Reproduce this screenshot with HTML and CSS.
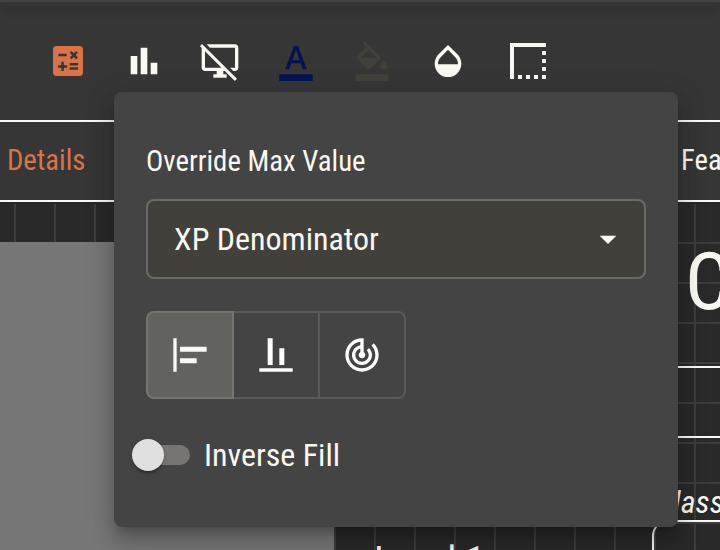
FILE: index.html
```
<!DOCTYPE html>
<html lang="en">
<head>
<meta charset="utf-8">
<title>Character Sheet</title>
<link rel="stylesheet" href="styles.css">
</head>
<body>
<div class="app">
  <div class="topbar"></div>
  <div class="toolbar">
    <svg class="icon accent" viewBox="0 0 24 24"><path d="M19 3H5c-1.1 0-2 .9-2 2v14c0 1.1.9 2 2 2h14c1.1 0 2-.9 2-2V5c0-1.1-.9-2-2-2m-5.97 4.06L14.09 6l1.41 1.41L16.91 6l1.06 1.06-1.41 1.41 1.41 1.41-1.06 1.06-1.41-1.4-1.41 1.41-1.06-1.06 1.41-1.41zm-6.78.66h5v1.5h-5zM11.5 16h-2v2H8v-2H6v-1.5h2v-2h1.5v2h2zm6.5 1.25h-5v-1.5h5zm0-2.5h-5v-1.5h5z"/></svg>
    <svg class="icon" viewBox="0 0 24 24"><path d="M4 9h4v11H4zm12 4h4v7h-4zm-6-9h4v16h-4z"/></svg>
    <svg class="icon" viewBox="0 0 24 24"><path d="M23 16c0 1.1-.9 2-2 2h-1l-2-2h3V4H6L4 2h17c1.1 0 2 .9 2 2zm-8.1 2 6 6 1.3-1.3-4.7-4.7-2-2L1.2 1.8 0 3.1l1 1V16c0 1.1.9 2 2 2h7v2H8v2h8v-2h-2v-2zM3 16V6.1l9.9 9.9z"/></svg>
    <svg class="icon navy" viewBox="0 0 24 24"><path d="M2 20h20v4H2zm3.49-3h2.42l1.27-3.58h5.65L16.09 17h2.42L13.25 3h-2.5zm4.42-5.61 2.03-5.79h.12l2.03 5.79z"/></svg>
    <svg class="icon muted" viewBox="0 0 24 24"><path d="M16.56 8.94 7.62 0 6.21 1.41l2.38 2.38-5.15 5.15c-.59.59-.59 1.54 0 2.12l5.5 5.5c.29.29.68.44 1.06.44s.77-.15 1.06-.44l5.5-5.5c.59-.58.59-1.53 0-2.12M5.21 10 10 5.21 14.79 10zM19 11.5s-2 2.17-2 3.5c0 1.1.9 2 2 2s2-.9 2-2c0-1.33-2-3.5-2-3.5M2 20h20v4H2z"/></svg>
    <svg class="icon" viewBox="0 0 24 24"><path d="M17.66 8 12 2.35 6.34 8C4.78 9.56 4 11.64 4 13.64s.78 4.11 2.34 5.67 3.61 2.35 5.66 2.35 4.1-.79 5.66-2.35S20 15.64 20 13.64 19.22 9.56 17.66 8M6 14c.01-2 .62-3.27 1.76-4.4L12 5.27l4.24 4.38C17.38 10.77 17.99 12 18 14z"/></svg>
    <svg class="icon large" viewBox="0 0 24 24"><path d="M15 21h2v-2h-2zm4 0h2v-2h-2zM7 21h2v-2H7zm4 0h2v-2h-2zm8-4h2v-2h-2zm0-4h2v-2h-2zM3 3v18h2V5h16V3zm16 6h2V7h-2z"/></svg>
  </div>
  <div class="tabs">
    <span class="tab accent-text">Details</span>
    <span class="tab">Features</span>
  </div>
  <div class="sheet">
    <div class="left">
      <div class="portrait"></div>
      <div class="level">Level 1</div>
    </div>
    <div class="right">
      <div class="name">C</div>
      <div class="rule"></div>
      <div class="klass">Class</div>
      <div class="box"></div>
    </div>
  </div>
</div>
<div class="panel">
  <div class="label">Override Max Value</div>
  <div class="select">
    <span class="text32">XP Denominator</span>
    <svg class="icon" viewBox="0 0 24 24"><path d="m7 10 5 5 5-5z"/></svg>
  </div>
  <div class="toggles">
    <div class="toggle selected"><svg class="icon" viewBox="0 0 24 24"><path d="M4 22H2V2h2zM22 7H6v3h16zm-6 7H6v3h10z"/></svg></div>
    <div class="toggle"><svg class="icon white" viewBox="0 0 24 24"><path d="M22 22H2v-2h20zM10 2H7v16h3zm7 6h-3v10h3z"/></svg></div>
    <div class="toggle"><svg class="icon white" viewBox="0 0 24 24"><path d="m19.07 4.93-1.41 1.41C19.1 7.79 20 9.79 20 12c0 4.42-3.58 8-8 8s-8-3.58-8-8c0-4.08 3.05-7.44 7-7.93v2.02C8.16 6.57 6 9.03 6 12c0 3.31 2.69 6 6 6s6-2.69 6-6c0-1.66-.67-3.16-1.76-4.24l-1.41 1.41C15.55 9.9 16 10.9 16 12c0 2.21-1.79 4-4 4s-4-1.79-4-4c0-1.86 1.28-3.41 3-3.86v2.14c-.6.35-1 .98-1 1.72 0 1.1.9 2 2 2s2-.9 2-2c0-.74-.4-1.38-1-1.72V2h-1C6.48 2 2 6.48 2 12s4.48 10 10 10 10-4.48 10-10c0-2.76-1.12-5.26-2.93-7.07"/></svg></div>
  </div>
  <div class="switch-row">
    <div class="track"><div class="thumb"></div></div>
    <span class="text32">Inverse Fill</span>
  </div>
</div>
</body>
</html>
```
FILE: styles.css
```
* { box-sizing: border-box; }
body {
  margin: 0;
  width: 720px;
  height: 550px;
  overflow: hidden;
  background: #292929;
  color: #f9f8f2;
  font-family: "Roboto Condensed", Roboto, sans-serif;
  font-stretch: 75%;
  white-space: nowrap;
}
.app { height: 550px; display: flex; flex-direction: column; overflow: hidden; }
.topbar {
  height: 2px;
  flex: none;
  background: #424242;
  position: relative;
  box-shadow: 0 4px 8px -2px rgba(0,0,0,.2), 0 8px 10px rgba(0,0,0,.14), 0 2px 20px rgba(0,0,0,.12);
}
.toolbar {
  height: 118px;
  flex: none;
  display: flex;
  align-items: center;
  gap: 36px;
  padding-left: 48px;
  background: #363636;
}
.icon { width: 40px; height: 40px; flex: none; fill: #f9f8f2; display: block; }
.accent { fill: #d9734a; }
.navy { fill: #051350; }
.muted { fill: #41403b; }
.white { fill: #fff; }
.large { width: 48px; height: 48px; }
.tabs {
  height: 82px;
  flex: none;
  display: flex;
  align-items: center;
  justify-content: space-between;
  padding-left: 7px;
  padding-bottom: 2px;
  border-top: 2px solid #f9f8f2;
  border-bottom: 2px solid #f9f8f2;
  background: #363636;
  font-size: 28.7px;
  position: relative;
  box-shadow: 0 2px 0 #272727;
}
.tab:last-child { width: 39px; }
.accent-text { color: #d9734a; }
.sheet {
  flex: 1;
  min-height: 0;
  display: flex;
  background-color: #292929;
  background-image:
    linear-gradient(90deg, #3d3d3d 2px, transparent 2px),
    linear-gradient(#3d3d3d 2px, transparent 2px);
  background-size: 40px 40px;
  background-position: 14px 0;
}
.left { width: 652px; flex: none; display: flex; padding-top: 40px; }
.portrait { width: 334px; height: 400px; background: #777; }
.level { padding: 296px 0 0 40px; font-size: 40px; line-height: 48px; }
.right { width: 68px; }
.name { height: 166px; padding: 33px 0 0 33px; border-bottom: 2px solid #f9f8f2; font-size: 80px; line-height: 94px; }
.rule { height: 70px; border-bottom: 2px solid #f9f8f2; }
.klass { height: 82px; padding: 45px 0 0 4px; font-size: 32px; line-height: 38px; font-style: italic; }
.box { width: 200px; height: 100px; border: 2px solid #f9f8f2; border-radius: 16px; }
.panel {
  position: absolute;
  left: 114px;
  top: 92px;
  width: 564px;
  height: 435px;
  padding: 52px 32px 0;
  border-radius: 8px;
  background: #444;
  box-shadow: 0 10px 10px -6px rgba(0,0,0,.2), 0 16px 20px 2px rgba(0,0,0,.14), 0 6px 28px 4px rgba(0,0,0,.12);
}
.label { font-size: 28.8px; line-height: 34px; }
.select {
  display: flex;
  align-items: center;
  justify-content: space-between;
  height: 80px;
  margin-top: 21px;
  padding: 0 16px 0 26px;
  border: 2px solid #6a6a69;
  border-radius: 8px;
  background: #41403b;
}
.text32 { font-size: 32px; }
.toggles {
  display: flex;
  width: 260px;
  height: 88px;
  margin-top: 32px;
}
.toggle {
  width: 88px;
  display: grid;
  place-items: center;
  border: 2px solid #5a5a5a;
}
.toggle + .toggle { width: 86px; border-left: 0; }
.toggle:first-child { border-radius: 8px 0 0 8px; }
.toggle:last-child { border-radius: 0 8px 8px 0; }
.selected { background: #62625f; border-color: #747472; }
.switch-row { display: flex; align-items: center; height: 40px; margin-top: 36px; margin-left: -8px; gap: 14px; }
.track { width: 52px; height: 20px; border-radius: 10px; background: #777573; display: flex; align-items: center; }
.thumb {
  width: 32px;
  height: 32px;
  flex: none;
  margin-left: -6px;
  border-radius: 50%;
  background: #e0e0e0;
  box-shadow: 0 4px 2px -2px rgba(0,0,0,.2), 0 2px 2px rgba(0,0,0,.14), 0 2px 6px rgba(0,0,0,.12);
}
```
